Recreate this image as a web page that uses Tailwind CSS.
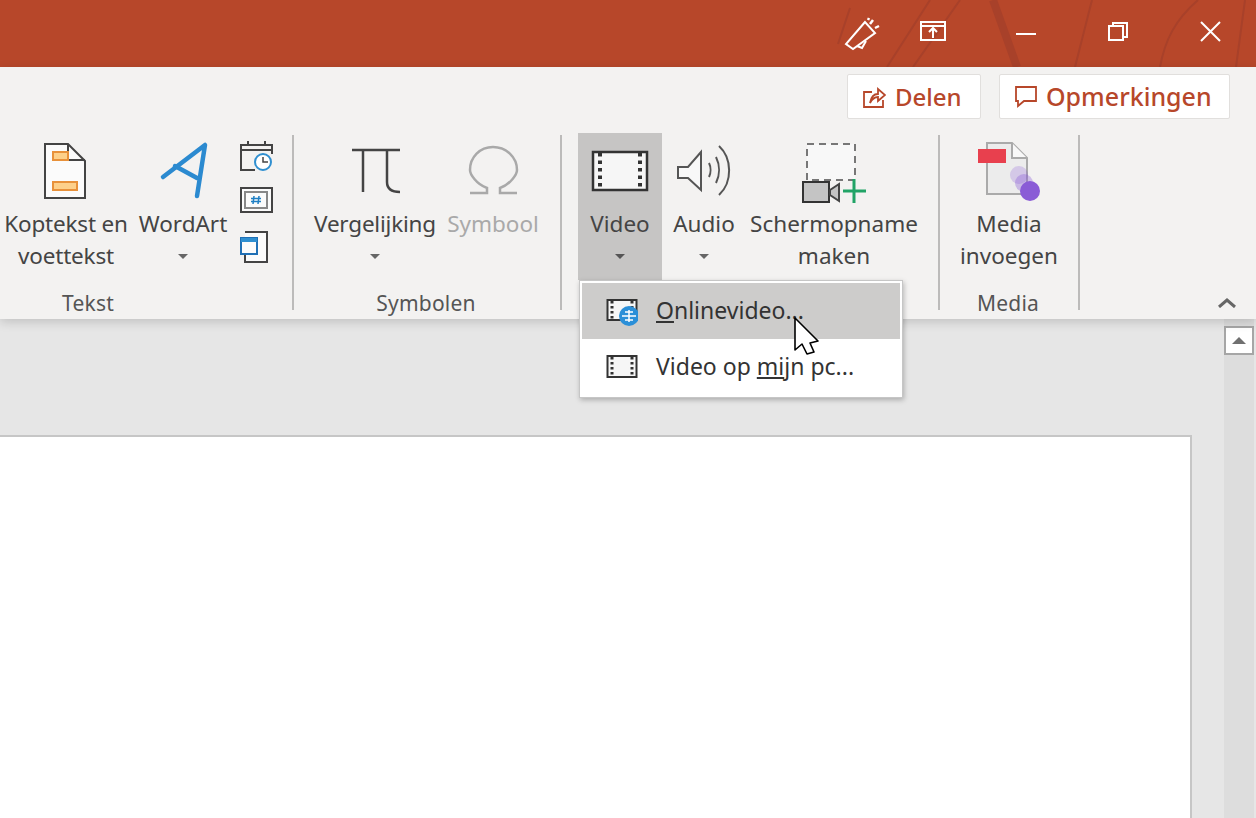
<!DOCTYPE html>
<html lang="nl">
<head>
    <meta charset="UTF-8">
    <script src="https://cdn.jsdelivr.net/npm/@tailwindcss/browser@4"></script>
    <title>Video invoegen</title>
</head>

<body class="bg-[#e6e6e6]">
<div class="relative w-[1256px] h-[818px] overflow-hidden flex flex-col font-['Noto_Sans','Open_Sans',sans-serif] text-[22.5px] text-[#444444]">

    <!-- title bar -->
    <header class="relative h-[67px] shrink-0 bg-[#b7472a] flex justify-end text-white">
        <svg class="absolute inset-0 w-full h-full" viewBox="0 0 1256 67" fill="none" stroke="#a8412a">
            <path d="M993 0 L1017 67" stroke-width="8"/>
            <path d="M930 0 L887 67 M960 0 L913 67 M1092 0 L1075 67 M850 8 L838 44 M1160 67 C1165 40 1175 20 1198 0 M1245 0 L1236 67" stroke-width="2"/>
        </svg>
        <button class="relative w-[54px] flex items-center justify-center">
            <svg class="w-[54px] h-[67px]" viewBox="834 0 54 67" fill="none" stroke="#ffffff" stroke-width="2">
                <path d="M865 22 L846 44 L853 49 L875 33 Z"/>
                <path d="M857 46 L862 48 L866 41"/>
                <path d="M870 24 L873 20 M875 28 L879 26 M868 20 L869 18" stroke-width="2.500"/>
            </svg>
        </button>
        <button class="relative w-[92px] flex items-center justify-center">
            <svg class="w-[92px] h-[67px]" viewBox="888 0 92 67" fill="none" stroke="#ffffff" stroke-width="2">
                <rect x="921" y="22" width="24" height="18"/>
                <path d="M921 26 H945"/>
                <path d="M933 38 V29 M929 32 L933 28 L937 32"/>
            </svg>
        </button>
        <button class="relative w-[92px] flex items-center justify-center">
            <span class="block w-[20px] h-[2px] bg-white"></span>
        </button>
        <button class="relative w-[92px] flex items-center justify-center">
            <svg class="w-[92px] h-[67px]" viewBox="1072 0 92 67" fill="none" stroke="#ffffff" stroke-width="2">
                <rect x="1109" y="26" width="14" height="14"/>
                <path d="M1113 26 V23 H1127 V37 H1123"/>
            </svg>
        </button>
        <button class="relative w-[92px] flex items-center justify-center">
            <svg class="w-[92px] h-[67px]" viewBox="1164 0 92 67" fill="none" stroke="#ffffff" stroke-width="2">
                <path d="M1201 22 L1220 41 M1220 22 L1201 41"/>
            </svg>
        </button>
    </header>

    <!-- ribbon -->
    <section class="relative z-10 h-[252px] shrink-0 bg-[#f3f2f1] flex flex-col shadow-[0_3px_10px_rgba(0,0,0,0.16)]">
        <div class="h-[66px] shrink-0 pt-[7px] pr-[26px] flex justify-end items-start gap-[18px] text-[#b7472a] text-[25px] font-medium">
            <button class="h-[45px] w-[134px] bg-white border border-[#e1dfdd] rounded-[2px] flex items-center pl-[14px] gap-[9px]">
                <svg class="w-[24px] h-[24px]" viewBox="861 86 24 24" fill="none" stroke="#b7472a" stroke-width="1.800">
                    <path d="M871 93 H863 V108 H882 V101"/>
                    <path d="M869 104 C870 98 873 95 877 95 V90 L884 96 L877 102 V98 C874 98 871 100 869 104 Z"/>
                </svg>
                <span class="text-[24px] pt-[1px]">Delen</span>
            </button>
            <button class="h-[45px] w-[231px] bg-white border border-[#e1dfdd] rounded-[2px] flex items-center pl-[14px] gap-[8px]">
                <svg class="w-[24px] h-[24px]" viewBox="1014 86 24 24" fill="none" stroke="#b7472a" stroke-width="1.800">
                    <path d="M1016 88 H1036 V102 H1024 L1018 107 V102 H1016 Z"/>
                </svg>
                <span class="pt-[1px]">Opmerkingen</span>
            </button>
        </div>

        <div class="flex-1 flex items-start">
            <!-- Tekst -->
            <div class="w-[292px] shrink-0">
                <div class="h-[154px] flex">
                    <button class="w-[132px] flex flex-col items-center">
                        <svg class="w-[132px] h-[75px]" viewBox="0 133 132 75">
                            <path d="M45 144 H68 L85 161 V198 H45 Z" fill="#fbfbfb" stroke="#444444" stroke-width="2"/>
                            <path d="M68 144 V160 H85" fill="none" stroke="#444444" stroke-width="2"/>
                            <rect x="53" y="152" width="15" height="8" fill="#fdd08a" stroke="#e8913a" stroke-width="2"/>
                            <rect x="53" y="182" width="24" height="8" fill="#fdd08a" stroke="#e8913a" stroke-width="2"/>
                        </svg>
                        <span class="leading-[32px] whitespace-nowrap tracking-[-0.2px]">Koptekst en<br>voettekst</span>
                    </button>
                    <button class="w-[102px] flex flex-col items-center">
                        <svg class="w-[102px] h-[75px]" viewBox="132 133 102 75" fill="none" stroke="#2b8ad0" stroke-width="4.500" stroke-linecap="round" stroke-linejoin="round">
                            <path d="M163 177 L205 145 L197 196"/>
                            <path d="M175 166 L197 178"/>
                        </svg>
                        <span class="leading-[32px] whitespace-nowrap">WordArt</span>
                        <span class="h-[32px] flex items-center">
                            <svg class="w-[10px] h-[5px]" viewBox="0 0 12 6"><path d="M0 0 H12 L6 6 Z" fill="#666666"/></svg>
                        </span>
                    </button>
                    <div class="w-[58px] pt-[6px] flex flex-col">
                        <svg class="w-[34px] h-[45px] ml-[6px]" viewBox="240 139 34 45">
                            <path d="M255 170 H241 V145 H272 V154" fill="none" stroke="#444444" stroke-width="2"/>
                            <path d="M241 150 H272 M248 141 V146 M265 141 V146" fill="none" stroke="#444444" stroke-width="2"/>
                            <circle cx="263" cy="162" r="8" fill="#ffffff" stroke="#2f8fd0" stroke-width="2"/>
                            <path d="M263 157 V162 H268" fill="none" stroke="#444444" stroke-width="1.500"/>
                        </svg>
                        <svg class="w-[34px] h-[45px] ml-[6px]" viewBox="240 184 34 45">
                            <rect x="241" y="188" width="31" height="24" fill="#fbfbfb" stroke="#444444" stroke-width="2"/>
                            <rect x="245" y="192" width="22" height="16" fill="none" stroke="#888888" stroke-width="2"/>
                            <path d="M254 196 L253 204 M259 196 L258 204 M251 198.500 H261 M251 201.500 H261" fill="none" stroke="#1f7fc4" stroke-width="1.500"/>
                        </svg>
                        <svg class="w-[34px] h-[45px] ml-[6px]" viewBox="240 229 34 45">
                            <path d="M245 232 H267 V262 H245 V254" fill="#fbfbfb" stroke="#444444" stroke-width="2"/>
                            <rect x="241" y="238" width="16" height="16" fill="#fbfbfb" stroke="#1f6fb5" stroke-width="2"/>
                            <rect x="241" y="238" width="16" height="4" fill="#2f8fd0"/>
                        </svg>
                    </div>
                </div>
                <div class="w-[176px] h-[32px] leading-[32px] text-center text-[21px] tracking-[0.2px] text-[#555555]">Tekst</div>
            </div>
            <div class="w-[2px] h-[175px] mt-[2px] shrink-0 bg-[#bcbbba]"></div>

            <!-- Symbolen -->
            <div class="w-[266px] shrink-0">
                <div class="h-[154px] flex">
                    <button class="w-[162px] flex flex-col items-center">
                        <svg class="w-[162px] h-[75px]" viewBox="294 133 162 75" fill="none" stroke="#444444" stroke-width="2.500">
                            <path d="M352 150 H400"/>
                            <path d="M363 150 V192"/>
                            <path d="M387 150 V182 C387 189 392 192 400 192"/>
                        </svg>
                        <span class="leading-[32px] whitespace-nowrap tracking-[-0.2px]">Vergelijking</span>
                        <span class="h-[32px] flex items-center">
                            <svg class="w-[10px] h-[5px]" viewBox="0 0 12 6"><path d="M0 0 H12 L6 6 Z" fill="#666666"/></svg>
                        </span>
                    </button>
                    <button class="w-[74px] flex flex-col items-center">
                        <svg class="w-[74px] h-[75px]" viewBox="456 133 74 75" fill="none" stroke="#a9a9a9" stroke-width="2.500">
                            <path d="M470 193 H487 V188 C476 184 470 174 470 170 C470 157 480 147 493 147 C506 147 517 157 517 170 C517 174 511 184 500 188 V193 H517"/>
                        </svg>
                        <span class="leading-[32px] whitespace-nowrap text-[#a9a9a9]">Symbool</span>
                    </button>
                </div>
                <div class="h-[32px] leading-[32px] text-center text-[21px] tracking-[0.2px] text-[#555555] pr-[2px]">Symbolen</div>
            </div>
            <div class="w-[2px] h-[175px] mt-[2px] shrink-0 bg-[#bcbbba]"></div>

            <!-- Video, audio, schermopname -->
            <div class="w-[376px] shrink-0 pl-[16px] flex">
                <button class="w-[84px] h-[147px] bg-[#c6c5c4] flex flex-col items-center">
                    <svg class="w-[84px] h-[75px]" viewBox="578 133 84 75">
                        <rect x="593" y="152" width="54" height="38" fill="#f6f6f6" stroke="#333333" stroke-width="2.500"/>
                        <path d="M600 153 V190 M640 153 V190" fill="none" stroke="#333333" stroke-width="4" stroke-dasharray="3.500 4"/>
                    </svg>
                    <span class="leading-[32px] whitespace-nowrap">Video</span>
                    <span class="h-[32px] flex items-center">
                        <svg class="w-[10px] h-[5px]" viewBox="0 0 12 6"><path d="M0 0 H12 L6 6 Z" fill="#555555"/></svg>
                    </span>
                </button>
                <button class="w-[84px] flex flex-col items-center">
                    <svg class="w-[84px] h-[75px]" viewBox="662 133 84 75" fill="none" stroke="#555555" stroke-width="2">
                        <path d="M678 167 H688 L701 152 V190 L688 178 H678 Z" fill="#f8f8f8"/>
                        <path d="M709 163 C711 167 711 173 709 177"/>
                        <path d="M716 157 C720 165 720 175 716 183"/>
                        <path d="M719 146 C732 158 733 182 719 195"/>
                    </svg>
                    <span class="leading-[32px] whitespace-nowrap">Audio</span>
                    <span class="h-[32px] flex items-center">
                        <svg class="w-[10px] h-[5px]" viewBox="0 0 12 6"><path d="M0 0 H12 L6 6 Z" fill="#666666"/></svg>
                    </span>
                </button>
                <button class="w-[176px] flex flex-col items-center">
                    <svg class="w-[176px] h-[75px]" viewBox="746 133 176 75">
                        <rect x="807" y="144" width="48" height="36" fill="#f8f8f8" stroke="#777777" stroke-width="2" stroke-dasharray="7 5"/>
                        <rect x="803" y="182" width="26" height="20" fill="#c4c4c4" stroke="#333333" stroke-width="2"/>
                        <path d="M830 190 L839 184 V201 L830 195 Z" fill="#c4c4c4" stroke="#444444" stroke-width="2"/>
                        <path d="M843 191 H866 M854 179 V203" fill="none" stroke="#21a366" stroke-width="3"/>
                    </svg>
                    <span class="leading-[32px] whitespace-nowrap">Schermopname<br>maken</span>
                </button>
            </div>
            <div class="w-[2px] h-[175px] mt-[2px] shrink-0 bg-[#bcbbba]"></div>

            <!-- Media -->
            <div class="w-[138px] shrink-0">
                <div class="h-[154px] flex">
                    <button class="w-[138px] flex flex-col items-center">
                        <svg class="w-[138px] h-[75px]" viewBox="940 133 138 75">
                            <path d="M987 143 H1012 L1027 158 V194 H987 Z" fill="#ececec" stroke="#aaaaaa" stroke-width="2"/>
                            <path d="M1012 143 V158 H1027" fill="#f8f8f8" stroke="#aaaaaa" stroke-width="2"/>
                            <rect x="978" y="149" width="28" height="14" fill="#e8404e"/>
                            <circle cx="1019" cy="175" r="9" fill="#8a5cd6" opacity="0.25"/>
                            <circle cx="1024" cy="183" r="9" fill="#8a5cd6" opacity="0.35"/>
                            <circle cx="1030" cy="191" r="10" fill="#8a5cd6"/>
                        </svg>
                        <span class="leading-[32px] whitespace-nowrap">Media<br>invoegen</span>
                    </button>
                </div>
                <div class="h-[32px] leading-[32px] text-center text-[21px] tracking-[0.2px] text-[#555555] pr-[2px]">Media</div>
            </div>
            <div class="w-[2px] h-[175px] mt-[2px] shrink-0 bg-[#bcbbba]"></div>

            <svg class="ml-auto mr-[20px] self-end mb-[11px] w-[18px] h-[10px]" viewBox="0 0 18 10" fill="none" stroke="#666666" stroke-width="3">
                <path d="M1 9 L9 2 L17 9"/>
            </svg>
        </div>
    </section>

    <!-- slide area and scrollbar -->
    <main class="flex-1 flex min-h-0">
        <div class="w-[1224px] pt-[116px]">
            <div class="w-[1192px] h-[400px] bg-white border-t-2 border-r-2 border-[#c6c6c6]"></div>
        </div>
        <div class="w-[30px] bg-[#dddddd] pt-[7px]">
            <div class="w-[30px] h-[29px] bg-white border-2 border-[#a6a6a6] flex items-center justify-center">
                <svg class="w-[14px] h-[7px]" viewBox="0 0 14 7"><path d="M0 7 L7 0 L14 7 Z" fill="#707070"/></svg>
            </div>
        </div>
    </main>

    <!-- dropdown menu -->
    <div class="absolute z-20 left-[579px] top-[280px] w-[324px] h-[118px] bg-white border border-[#c6c6c6] p-[2px] shadow-[1px_2px_5px_rgba(0,0,0,0.25)] text-[#333333] text-[23px]">
        <div class="h-[56px] w-[318px] bg-[#cdcccb] flex items-center pl-[24px] gap-[18px]">
            <svg class="w-[32px] h-[34px]" viewBox="606 293 32 34">
                <rect x="607.500" y="299" width="29" height="20" fill="#f6f6f6" stroke="#333333" stroke-width="2"/>
                <path d="M612 300 V319 M632 300 V319" fill="none" stroke="#333333" stroke-width="3" stroke-dasharray="2.500 2.500"/>
                <circle cx="629" cy="315" r="10" fill="#2b8fd8"/>
                <path d="M622 315 H636 M625 311 H633 M625 319 H633 M629 309 V321" fill="none" stroke="#ffffff" stroke-width="1.500"/>
            </svg>
            <span class="whitespace-nowrap -mt-[2px]"><u class="underline-offset-2">O</u>nlinevideo...</span>
        </div>
        <div class="h-[56px] flex items-center pl-[24px] gap-[18px]">
            <svg class="w-[32px] h-[34px]" viewBox="606 349 32 34">
                <rect x="607.500" y="355" width="29" height="21" fill="#f6f6f6" stroke="#333333" stroke-width="2"/>
                <path d="M612 356 V376 M632 356 V376" fill="none" stroke="#333333" stroke-width="3" stroke-dasharray="2.500 2.500"/>
            </svg>
            <span class="whitespace-nowrap -mt-[2px]">Video op <u class="underline-offset-2">mi</u>jn pc...</span>
        </div>
    </div>

    <!-- mouse pointer -->
    <svg class="absolute z-30 left-[790px] top-[315px] w-[32px] h-[42px]" viewBox="790 315 32 42">
        <path d="M795 318 V350 L802 344 L807 354 L814 352 L810 343 L818 341 Z" fill="#ffffff" stroke="#000000" stroke-width="1.600" stroke-linejoin="round"/>
    </svg>
</div>
</body>
</html>
